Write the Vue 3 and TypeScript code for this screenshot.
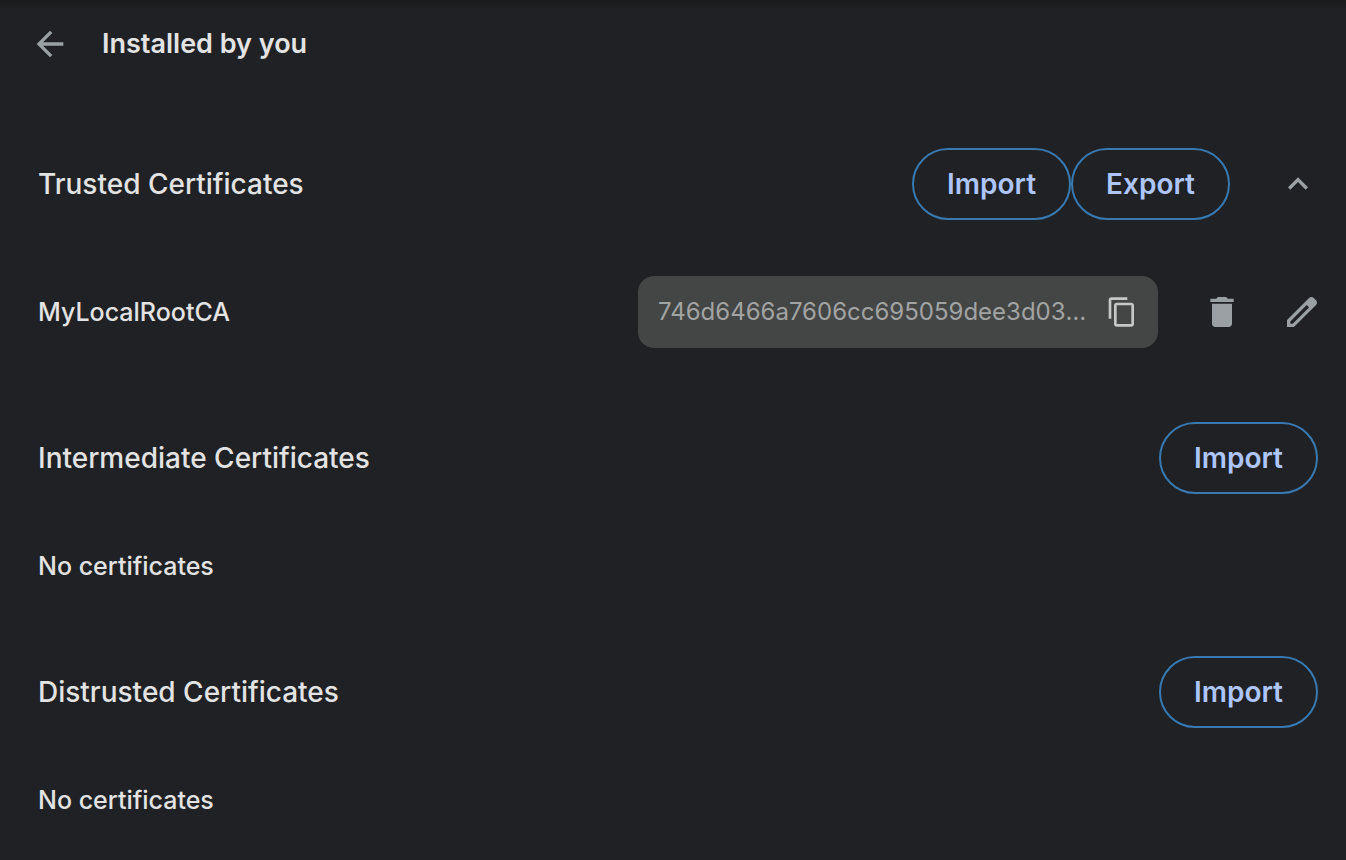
<script setup lang="ts">
import { ref } from 'vue'

const expanded = ref(true)
const hash = '746d6466a7606cc695059dee3d03f2b18ac94e5701b6de82c3390fa74e18d25b'
const emptySections = ['Intermediate Certificates', 'Distrusted Certificates']
</script>

<template>
  <main class="page">
    <header class="topbar">
      <button class="icon-button" type="button" aria-label="Back">
        <svg viewBox="0 0 24 24" aria-hidden="true">
          <path d="M20 11H7.83l5.59-5.59L12 4l-8 8 8 8 1.41-1.41L7.83 13H20v-2z" />
        </svg>
      </button>
      <h1>Installed by you</h1>
    </header>

    <section class="group">
      <div class="group-head">
        <h2>Trusted Certificates</h2>
        <button class="pill" type="button">Import</button>
        <button class="pill" type="button">Export</button>
        <button
          class="icon-button chevron"
          type="button"
          aria-label="Toggle trusted certificates"
          :aria-expanded="expanded"
          @click="expanded = !expanded"
        >
          <svg viewBox="0 0 24 24" aria-hidden="true">
            <path d="M12 8l-6 6 1.41 1.41L12 10.83l4.59 4.58L18 14z" />
          </svg>
        </button>
      </div>
      <div v-if="expanded" class="entry">
        <span class="name">MyLocalRootCA</span>
        <div class="hash">
          <input type="text" readonly :value="hash" aria-label="Certificate hash" />
          <button class="icon-button copy" type="button" aria-label="Copy hash">
            <svg viewBox="0 0 24 24" aria-hidden="true">
              <path d="M16 1H4c-1.1 0-2 .9-2 2v14h2V3h12V1zm3 4H8c-1.1 0-2 .9-2 2v14c0 1.1.9 2 2 2h11c1.1 0 2-.9 2-2V7c0-1.1-.9-2-2-2zm0 16H8V7h11v14z" />
            </svg>
          </button>
        </div>
        <button class="icon-button" type="button" aria-label="Delete certificate">
          <svg viewBox="0 0 24 24" aria-hidden="true">
            <path d="M6 19c0 1.1.9 2 2 2h8c1.1 0 2-.9 2-2V7H6v12zM19 4h-3.5l-1-1h-5l-1 1H5v2h14V4z" />
          </svg>
        </button>
        <button class="icon-button" type="button" aria-label="Edit certificate">
          <svg viewBox="0 0 24 24" aria-hidden="true">
            <path fill-rule="evenodd" d="M20.41 4.94l-1.35-1.35c-.78-.78-2.05-.78-2.83 0L3 16.82V21h4.18L20.41 7.77c.79-.78.79-2.05 0-2.83zM6.41 19.06L5 19v-1.36l9.82-9.82 1.41 1.41z" />
          </svg>
        </button>
      </div>
    </section>

    <section v-for="title in emptySections" :key="title" class="group">
      <div class="group-head">
        <h2>{{ title }}</h2>
        <button class="pill" type="button">Import</button>
      </div>
      <p class="empty">No certificates</p>
    </section>
  </main>
</template>

<style>
body {
  margin: 0;
  background: #202124;
}
</style>

<style scoped>
.page {
  min-height: 100vh;
  box-sizing: border-box;
  background: linear-gradient(#1a1b1d, #202124 10px);
  color: #e3e3e3;
  font-family: Inter, "Liberation Sans", sans-serif;
  font-size: 25px;
  font-weight: 500;
  line-height: 32px;
}
.topbar {
  display: flex;
  align-items: center;
  gap: 32px;
  height: 88px;
  padding: 0 30px;
}
h1,
h2 {
  margin: 0;
  font-size: 28px;
}
h1 {
  font-size: 27px;
  font-weight: 600;
}
h2 {
  flex: 1;
  font-weight: 500;
}
.group {
  padding: 60px 24px 0 38px;
}
.group + .group {
  padding-top: 74px;
}
.group-head {
  display: flex;
  align-items: center;
  padding-right: 4px;
}
.pill {
  height: 72px;
  padding: 0 33px;
  border: 2px solid #3779b0;
  border-radius: 36px;
  background: transparent;
  color: #adc5f9;
  font: 600 28px/32px Inter, "Liberation Sans", sans-serif;
}
.icon-button {
  display: flex;
  flex: none;
  padding: 0;
  border: 0;
  background: transparent;
  color: #9aa0a4;
}
.icon-button svg {
  width: 40px;
  height: 40px;
  fill: currentColor;
}
.chevron {
  margin-left: 48px;
}
.entry {
  display: flex;
  align-items: center;
  gap: 40px;
  padding-top: 56px;
}
.name {
  flex: 1;
}
.hash {
  display: flex;
  align-items: center;
  gap: 16px;
  box-sizing: border-box;
  width: 520px;
  height: 72px;
  margin-right: 4px;
  padding: 0 20px;
  border-radius: 16px;
  background: #444645;
}
.hash input {
  flex: 1;
  min-width: 0;
  padding: 0;
  border: 0;
  outline: 0;
  background: transparent;
  color: #a2a3a3;
  font: 400 24px/32px Inter, "Liberation Sans", sans-serif;
  text-overflow: ellipsis;
}
.hash .copy {
  color: #c7c7c7;
}
.hash .copy svg {
  width: 32px;
  height: 32px;
}
.empty {
  margin: 0;
  padding-top: 56px;
}
</style>
